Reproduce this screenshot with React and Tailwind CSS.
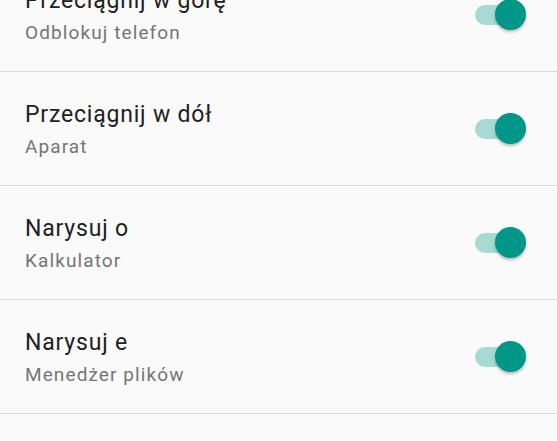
const items = [
  { title: 'Przeciągnij w górę', subtitle: 'Odblokuj telefon' },
  { title: 'Przeciągnij w dół', subtitle: 'Aparat' },
  { title: 'Narysuj o', subtitle: 'Kalkulator' },
  { title: 'Narysuj e', subtitle: 'Menedżer plików' },
]

const Toggle = () => (
  <div className="relative w-[52px] h-[32px] shrink-0">
    <div className="absolute left-0 top-[6px] w-[48px] h-[20px] rounded-full bg-[#a8dad4]" />
    <div className="absolute left-[20px] top-0 w-[31px] h-[31px] rounded-full bg-[#009688] shadow-[0_2px_3px_rgba(0,0,0,0.25)]" />
  </div>
)

export default function App() {
  return (
    <div className="w-[557px] h-[441px] overflow-hidden bg-[#fafafa] font-['Roboto',sans-serif]">
      <div className="mt-[-42px]">
        {items.map((item, i) => (
          <div
            key={i}
            className="h-[114px] flex items-center justify-between border-b border-[#dcdcdc] pl-[25px] pr-[30px]"
          >
            <div className="flex flex-col pt-[3px]">
              <div className="text-[23px] leading-[28px] tracking-[0.8px] text-[#212121]">{item.title}</div>
              <div className="mt-[6px] text-[19px] leading-[24px] tracking-[1.1px] text-[#757575]">{item.subtitle}</div>
            </div>
            <Toggle />
          </div>
        ))}
      </div>
    </div>
  )
}
